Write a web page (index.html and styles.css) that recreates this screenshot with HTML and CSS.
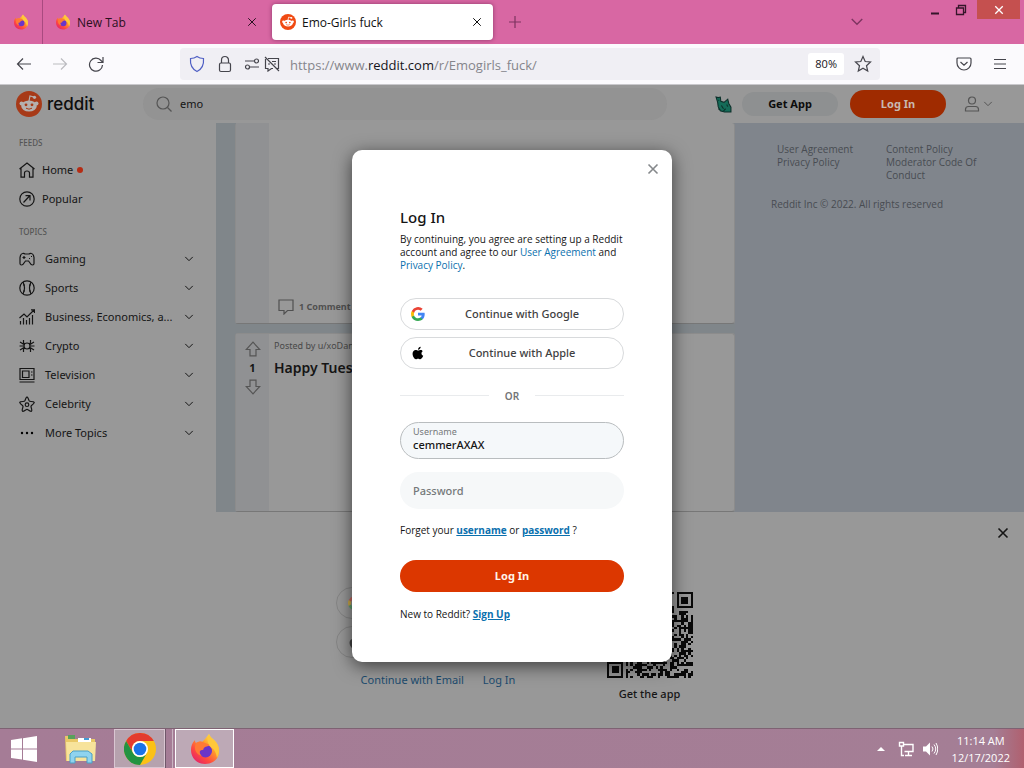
FILE: index.html
```html
<!DOCTYPE html>
<html lang="en">
<head>
<meta charset="utf-8">
<meta name="viewport" content="width=device-width, initial-scale=1">
<title>Emo-Girls fuck</title>
<link rel="stylesheet" href="styles.css">
</head>
<body>
<svg class="defs" aria-hidden="true">
  <defs>
    <linearGradient id="fox-body" x1="0.9" y1="0.1" x2="0.2" y2="1">
      <stop offset="0" stop-color="#fff04a"/><stop offset=".35" stop-color="#ffa02b"/><stop offset=".7" stop-color="#ff4a3f"/><stop offset="1" stop-color="#e3206c"/>
    </linearGradient>
    <symbol id="firefox" viewBox="0 0 32 32">
      <path d="M20 1c1 3 3 4 5 6 3 3 5 6 5 11 0 8-6 13-14 13S2 25 2 17c0-4 1-7 4-10 0 1 0 2 1 3 2-1 4-2 6-1 3-3 5-5 7-8z" fill="url(#fox-body)"/>
      <circle cx="16.500" cy="18" r="6.500" fill="#6a35c9"/>
      <path d="M7 10c3-2 6-2 9 0 2 1 4 1 5 2-2 2-5 1-6 3-1 1 0 2-2 2-3 0-3 4 0 6-5-1-9-6-6-13z" fill="#ff7a35"/>
      <path d="M20 1c1 3 3 4 5 6 3 3 5 6 5 11 0 3-1 5-2 7-1-5-2-8-5-10-4-3-6-8-3-14z" fill="#ffc83a"/>
    </symbol>
    <symbol id="snoo" viewBox="0 0 26 26">
      <circle cx="13" cy="13" r="13" fill="currentColor"/>
      <g class="face">
        <path d="M13 10l1-5 4 1" fill="none" stroke="var(--face, #fff)" stroke-width="1.200"/>
        <circle cx="18.500" cy="6.300" r="1.600" fill="var(--face, #fff)"/>
        <circle cx="5.500" cy="12.500" r="2" fill="var(--face, #fff)"/><circle cx="20.500" cy="12.500" r="2" fill="var(--face, #fff)"/>
        <ellipse cx="13" cy="15" rx="7.800" ry="5.500" fill="var(--face, #fff)"/>
      </g>
      <circle cx="10" cy="13.800" r="1.400" fill="currentColor"/><circle cx="16" cy="13.800" r="1.400" fill="currentColor"/>
      <path d="M10 17.200q3 2 6 0" fill="none" stroke="currentColor"/>
    </symbol>
    <symbol id="cross" viewBox="0 0 12 12"><path d="M1.500 1.500l9 9M10.500 1.500l-9 9"/></symbol>
    <symbol id="chevron" viewBox="0 0 12 12"><path d="M1.500 3.500L6 8l4.500-4.500"/></symbol>
    <symbol id="vote" viewBox="0 0 16 16"><path d="M8 1.200L14.800 8.500H11V14.800H5V8.500H1.200z"/></symbol>
    <symbol id="google" viewBox="0 0 18 18">
      <path d="M17.600 9.200c0-.6-.1-1.200-.2-1.800H9v3.500h4.800a4.100 4.100 0 0 1-1.800 2.700v2.300h2.900c1.700-1.600 2.700-3.900 2.700-6.700z" fill="#4285f4"/>
      <path d="M9 18c2.400 0 4.500-.8 6-2.200l-3-2.200c-.8.500-1.800.9-3 .9-2.300 0-4.300-1.600-5-3.700H1v2.300A9 9 0 0 0 9 18z" fill="#34a853"/>
      <path d="M4 10.700a5.400 5.400 0 0 1 0-3.400V5H1a9 9 0 0 0 0 8z" fill="#fbbc05"/>
      <path d="M9 3.600c1.300 0 2.500.5 3.400 1.300L15 2.300A9 9 0 0 0 1 5l3 2.300c.7-2.100 2.700-3.700 5-3.700z" fill="#ea4335"/>
    </symbol>
    <symbol id="apple" viewBox="0 0 16 18">
      <path d="M11.500 1c.1 2-1.500 3.800-3.500 3.800C7.800 3 9.500 1.200 11.500 1zM14 6.700c-2.300 1.400-2 4.800.7 5.900-.7 2-2.200 4.400-3.800 4.400-1.100 0-1.500-.7-2.800-.7s-1.700.7-2.800.7C3.200 17 1 12.800 1 10c0-3.200 2-5 4-5 1.300 0 2.200.8 3.200.8S10.300 5 11.700 5c1 0 1.800.7 2.300 1.700z"/>
    </symbol>
  </defs>
</svg>

<div class="window">
  <header class="tabstrip">
    <button class="pinned" aria-label="Pinned tab"><svg class="i16"><use href="#firefox"/></svg></button>
    <div class="tab">
      <svg class="i16"><use href="#firefox"/></svg><span class="tab-title">New Tab</span>
      <button class="tab-close" aria-label="Close tab"><svg class="line i10"><use href="#cross"/></svg></button>
    </div>
    <div class="tab active">
      <svg class="i16 orange"><use href="#snoo"/></svg><span class="tab-title">Emo-Girls fuck</span>
      <button class="tab-close" aria-label="Close tab"><svg class="line i10"><use href="#cross"/></svg></button>
    </div>
    <button class="new-tab" aria-label="New tab"><svg class="line i12" viewBox="0 0 12 12"><path d="M6 0v12M0 6h12"/></svg></button>
    <button class="all-tabs" aria-label="List all tabs"><svg class="line i14"><use href="#chevron"/></svg></button>
    <div class="controls">
      <button aria-label="Minimize"><svg class="i12" viewBox="0 0 12 12"><path d="M2 8.500h8v2H2z" fill="#35152a"/></svg></button>
      <button aria-label="Restore"><svg class="i12" viewBox="0 0 12 12"><path d="M1.500 4h7v6.500h-7zM3.500 4V1.500h7v7h-2" fill="none" stroke="#35152a" stroke-width="1.300"/></svg></button>
      <button class="shut" aria-label="Close"><svg class="line heavy i10"><use href="#cross"/></svg></button>
    </div>
  </header>

  <nav class="toolbar" aria-label="Navigation">
    <div class="history">
      <button aria-label="Back"><svg class="line i16" viewBox="0 0 16 16"><path d="M15 8H1.500M7 2.500L1.500 8 7 13.500"/></svg></button>
      <button class="off" aria-label="Forward"><svg class="line i16" viewBox="0 0 16 16"><path d="M1 8h13.500M9 2.500L14.500 8 9 13.500"/></svg></button>
      <button aria-label="Reload"><svg class="line i16" viewBox="0 0 16 16"><path d="M14.500 9A6.500 6.500 0 1 1 13 4.500l1.500 1.500M15 1v5.500H9.500"/></svg></button>
    </div>
    <div class="urlbar">
      <svg class="line i18 shield" viewBox="0 0 18 18"><path d="M9 1.500c2 1.500 4 2 6.500 2C16 9 14 14 9 16.500 4 14 2 9 2.500 3.500c2.500 0 4.500-.5 6.500-2z"/></svg>
      <svg class="line i18" viewBox="0 0 18 18"><rect x="3.500" y="8" width="11" height="8.500" rx="1.500"/><path d="M5.500 8V5a3.500 3.500 0 0 1 7 0v3"/></svg>
      <svg class="line i16 perm" viewBox="0 0 16 16"><path d="M9 5H15M1 11h1M1 5h8" stroke="none"/><path d="M1 5h9M6 11h9"/><circle cx="12.500" cy="5" r="2"/><circle cx="3.500" cy="11" r="2"/></svg>
      <svg class="line i16" viewBox="0 0 16 16"><path d="M4 2.500h10.500v10H12M1.500 3v9.500H4V15l3.500-2.500H9M1 1l14 14M8 5.500h4M10 8h2M4 8h2"/></svg>
      <div class="url" role="textbox" aria-label="Address">https://www.<b>reddit.com</b>/r/Emogirls_fuck/</div>
      <button class="zoom">80%</button>
      <button class="star" aria-label="Bookmark"><svg class="line i18" viewBox="0 0 18 18"><path d="M9 1.500l2.200 5 5.300.5-4 3.700 1.200 5.300L9 13.200 4.300 16l1.200-5.300-4-3.700 5.300-.5z"/></svg></button>
    </div>
    <div class="tools">
      <button aria-label="Save to Pocket"><svg class="line i16" viewBox="0 0 16 16"><path d="M2 2h12q1 0 1 1v4a7 7 0 0 1-14 0V3q0-1 1-1zM4.500 6L8 9.300 11.500 6"/></svg></button>
      <button aria-label="Menu"><svg class="line i14" viewBox="0 0 14 14"><path d="M1 2.500h12M1 7h12M1 11.500h12"/></svg></button>
    </div>
  </nav>

  <div class="page">
    <header class="site-head">
      <a class="brand" href="#"><svg class="i26"><use href="#snoo"/></svg><span>reddit</span></a>
      <label class="search"><svg class="line i16" viewBox="0 0 16 16"><circle cx="7" cy="7" r="6"/><path d="M11.500 11.500L15.500 15.500"/></svg><input type="text" value="emo" aria-label="Search"></label>
      <svg class="dino" viewBox="0 0 16 16" aria-hidden="true"><path d="M1 1l2 .5L5 1l.5 4 3 1L12 3l1 4 2 3.500V15H9l-4-1-2-4-.5-4z" fill="#146b58" stroke="#0c2f2a"/><path d="M3 4h1M6 9l2 3M11 8l1 2M8 14l2-2M3 12l2 1" stroke="#0c2f2a"/></svg>
      <button class="pill get">Get App</button>
      <button class="pill go">Log In</button>
      <button class="account" aria-label="Account menu"><svg class="line i16" viewBox="0 0 16 16"><circle cx="8" cy="4.500" r="3.500"/><path d="M1.500 15v-1.500q0-3 3-3h7q3 0 3 3V15z"/></svg><svg class="line i10"><use href="#chevron"/></svg></button>
    </header>

    <div class="columns">
      <aside class="side">
        <h3>FEEDS</h3>
        <ul>
          <li><a href="#"><svg class="line i16" viewBox="0 0 16 16"><path d="M.5 7L8 1l7.500 6M2 6v9.200h3.500V11q0-2 2.500-2t2.500 2v4.200H14V6"/></svg>Home<i class="dot"></i></a></li>
          <li><a href="#"><svg class="line i16" viewBox="0 0 16 16"><circle cx="8" cy="8" r="7.200"/><path d="M4.500 11.500l6.500-7M6.500 4.700H11v4.800"/></svg>Popular</a></li>
        </ul>
        <h3>TOPICS</h3>
        <ul class="topics">
          <li><button><svg class="line i16" viewBox="0 0 16 16"><path d="M3.500 2.500Q5 2 6 3h4q1-1 2.500-.5 2 .5 2.500 4v6q0 1.500-1.500 1.500T11 12L9.500 10h-3L5 12q-1 2-2.500 2T1 12.500v-6q.5-3.500 2.500-4zM3.500 6.500h3M5 5v3M10 7.500h1M12 5.500h1"/></svg><span>Gaming</span><svg class="line i10"><use href="#chevron"/></svg></button></li>
          <li><button><svg class="line i16" viewBox="0 0 16 16"><circle cx="8" cy="8" r="7.200"/><path d="M4 2q3 6 0 12M12 2q-3 6 0 12M4 5h2M4 11h2M10 5h2M10 11h2"/></svg><span>Sports</span><svg class="line i10"><use href="#chevron"/></svg></button></li>
          <li><button><svg class="line i16" viewBox="0 0 16 16"><path d="M.5 9L5 5l3 3 7.500-7.500M12 .8h3.500V4M1.500 12v3.500M4.500 9v6.500M7.500 11v4.500M10.500 9v6.500M13.500 6v9.500"/></svg><span>Business, Economics, a...</span><svg class="line i10"><use href="#chevron"/></svg></button></li>
          <li><button><svg class="line i16" viewBox="0 0 16 16"><circle cx="8" cy="8" r="3"/><path d="M.5 8H5M11 8h4.500M6 5.700L4.500 5V2M10 5.700l1.500-.7V2M6 10.300l-1.500.7v3M10 10.300l1.500.7v3M1 4l4 2.500M15 4l-4 2.500M1 12l4-2.500M15 12l-4-2.500"/></svg><span>Crypto</span><svg class="line i10"><use href="#chevron"/></svg></button></li>
          <li><button><svg class="line i16" viewBox="0 0 16 16"><path d="M1 1.500h14v11H1zM.5 15h15M3.500 4h6.500v6.500H3.500zM12 5h1.500M12 8h1.500"/></svg><span>Television</span><svg class="line i10"><use href="#chevron"/></svg></button></li>
          <li><button><svg class="line i16" viewBox="0 0 16 16"><path d="M8 .8Q9 1 10 4.500q.5 1 2 1 3 0 3.300 1-.2 1-2.800 3-.8.700-.3 2 1 3 .3 3.700-1 .5-3.500-1.400-1-.8-2 0Q4.500 15.700 3.500 15.200q-.7-.7.3-3.700.5-1.300-.3-2Q.9 7.500.7 6.500q.3-1 3.300-1 1.500 0 2-1Q7 1 8 .8z"/><circle cx="8" cy="8.700" r="1.800"/></svg><span>Celebrity</span><svg class="line i10"><use href="#chevron"/></svg></button></li>
          <li><button><svg class="i16" viewBox="0 0 16 16"><circle cx="3" cy="8" r="1.200"/><circle cx="8" cy="8" r="1.200"/><circle cx="13" cy="8" r="1.200"/></svg><span>More Topics</span><svg class="line i10"><use href="#chevron"/></svg></button></li>
        </ul>
      </aside>

      <main class="feed">
        <article class="post first">
          <div class="votes"></div>
          <div class="post-body"><a class="comments" href="#"><svg class="line i16" viewBox="0 0 16 16"><path d="M1 1h14v10.500H9.500L6 15v-3.500H1z"/></svg>1 Comment</a></div>
        </article>
        <article class="post">
          <div class="votes">
            <button aria-label="Upvote"><svg class="line i16"><use href="#vote"/></svg></button>
            <strong>1</strong>
            <button aria-label="Downvote"><svg class="line i16 down"><use href="#vote"/></svg></button>
          </div>
          <div class="post-body"><p>Posted by u/xoDan</p><h2>Happy Tuesday</h2></div>
        </article>
      </main>

      <aside class="legal">
        <div class="legal-links">
          <div><a href="#">User Agreement</a><a href="#">Privacy Policy</a></div>
          <div><a href="#">Content Policy</a><a href="#">Moderator Code Of Conduct</a></div>
        </div>
        <p>Reddit Inc © 2022. All rights reserved</p>
      </aside>
    </div>

    <section class="banner">
      <div class="signup">
        <button aria-label="Continue with Google"><svg class="i14"><use href="#google"/></svg></button>
        <button aria-label="Continue with Apple"><svg class="i14"><use href="#apple"/></svg></button>
        <div class="signup-links"><a href="#">Continue with Email</a><a href="#">Log In</a></div>
      </div>
      <div class="app"><svg id="qr" class="qr" viewBox="0 0 37 37" role="img" aria-label="QR code"></svg><span>Get the app</span></div>
      <button class="banner-close" aria-label="Dismiss"><svg class="line heavy i12"><use href="#cross"/></svg></button>
    </section>

    <div class="overlay">
      <form class="modal" role="dialog" aria-labelledby="login-title">
        <button type="button" class="modal-close" aria-label="Close"><svg class="line heavy i12"><use href="#cross"/></svg></button>
        <h1 id="login-title">Log In</h1>
        <p class="terms">By continuing, you agree are setting up a Reddit account and agree to our <a href="#">User Agreement</a> and <a href="#">Privacy Policy</a>.</p>
        <button type="button" class="sso"><svg class="i14"><use href="#google"/></svg><span>Continue with Google</span></button>
        <button type="button" class="sso"><svg class="i14"><use href="#apple"/></svg><span>Continue with Apple</span></button>
        <div class="or">OR</div>
        <div class="field filled"><label for="user">Username</label><input id="user" type="text" value="cemmerAXAX"></div>
        <div class="field"><input type="password" placeholder="Password" aria-label="Password"></div>
        <p class="forgot">Forget your <a href="#">username</a> or <a href="#">password</a> ?</p>
        <button type="button" class="submit">Log In</button>
        <p class="join">New to Reddit? <a href="#">Sign Up</a></p>
      </form>
    </div>
  </div>

  <footer class="taskbar">
    <button class="start" aria-label="Start"><svg viewBox="0 0 28 28"><path d="M1 5l11-1.700V13.500H1zM13 3.200L27 1v12.500H13zM1 14.500h11v10L1 23zM13 14.500h14V27l-14-2.200z" fill="#fff"/></svg></button>
    <button class="files" aria-label="File Explorer"><svg viewBox="0 0 34 30"><path d="M1 2h8l2 3h20v22H2z" fill="#e9c866"/><path d="M4 1h7v4H4z" fill="#59a05b"/><path d="M14 4h13v4H14z" fill="#fff"/><path d="M20 4h5v2h-5z" fill="#429cd6"/><path d="M2 8h30l-1 19H3z" fill="#f7e39b"/><path d="M6 29V20l3-3h15l4 3v9h-5v-6H11v6z" fill="#8fd3ee" stroke="#4b9fc6"/></svg></button>
    <button class="task chrome" aria-label="Chrome"><svg viewBox="0 0 32 32"><circle cx="16" cy="16" r="16" fill="#fbc116"/><path d="M2.140 8A16 16 0 0 1 29.860 8H16a8 8 0 0 0-7 12z" fill="#e33b2e"/><path d="M2.140 8A16 16 0 0 0 16 32l6.900-12A8 8 0 0 1 9.100 20z" fill="#229342"/><circle cx="16" cy="16" r="8" fill="#fff"/><circle cx="16" cy="16" r="6.300" fill="#1a73e8"/></svg></button>
    <span class="stack"></span>
    <button class="task current" aria-label="Firefox"><svg><use href="#firefox"/></svg></button>
    <div class="tray">
      <svg class="i10" viewBox="0 0 10 10"><path d="M1 7l4-4 4 4z" fill="#fff"/></svg>
      <svg class="i16" viewBox="0 0 16 16"><path d="M6 3.500h9v7H6.500M10.500 10.500V14M7 14.500h7M1.500 1.500h4V5h-4zM3.500 5v9.500H6" fill="none" stroke="#fff" stroke-width="1.400"/></svg>
      <svg class="i16" viewBox="0 0 16 16"><path d="M1 5.500h3l4-4v13l-4-4H1z" fill="#fff"/><path d="M10 5.500q2 2.500 0 5M12 3.500q3.500 4.500 0 9M14 2q3.500 6 0 12" fill="none" stroke="#fff"/></svg>
      <div class="clock"><span>11:14 AM</span><span>12/17/2022</span></div>
    </div>
  </footer>
</div>
<script src="qr.js"></script>
</body>
</html>
```
FILE: styles.css
```css
* { box-sizing: border-box; }
body, h1, h2, h3, p, ul { margin: 0; padding: 0; }
body { font: 11px/16px "Noto Sans", sans-serif; color: #151515; }
button { border: 0; background: none; padding: 0; font: inherit; color: inherit; display: flex; align-items: center; justify-content: center; }
input { border: 0; background: none; padding: 0; font: inherit; color: inherit; min-width: 0; outline: 0; }
ul { list-style: none; }
a { color: inherit; text-decoration: none; }
svg { flex: none; display: block; }
.defs { position: absolute; width: 0; height: 0; }
.line { fill: none; stroke: currentColor; stroke-width: 1.2; }
.heavy { stroke-width: 1.6; }
.i10 { width: 10px; height: 10px; }
.i12 { width: 12px; height: 12px; }
.i14 { width: 14px; height: 14px; }
.i16 { width: 16px; height: 16px; }
.i18 { width: 18px; height: 18px; }
.i26 { width: 26px; height: 26px; }
.orange { color: #f04a12; }

.window { min-height: 100vh; display: flex; flex-direction: column; overflow: hidden; }

/* Tabs */
.tabstrip { height: 44px; display: flex; align-items: center; background: #d867a3; font: 12px/18px "Open Sans", sans-serif; position: relative; }
.pinned { width: 43px; height: 44px; border-right: 1px solid #a94a80; }
.tab { width: 221px; height: 36px; margin-right: 8px; padding: 0 6px 0 12px; display: flex; align-items: center; gap: 6px; color: #2a1020; }
.tab.active { margin: 0; padding: 0 10px 0 8px; background: #fff; color: #111; border-radius: 4px; box-shadow: 0 0 4px rgba(70, 10, 50, .5); }
.tab-title { flex: 1; padding-top: 1px; }
.tab-close { width: 12px; height: 16px; }
.new-tab { width: 44px; height: 36px; color: #7d3460; }
.all-tabs { margin-left: auto; margin-right: 160px; color: #7d3460; }
.controls { position: absolute; top: 0; right: 4px; display: flex; }
.controls button { width: 26px; height: 19px; }
.controls .shut { width: 43px; margin-left: 3px; background: #c5504f; color: #fff; }

/* Navigation toolbar */
.toolbar { min-height: 41px; display: flex; align-items: center; background: #fbfafd; color: #45454c; border-bottom: 1px solid #c9c8cc; }
.history { display: flex; gap: 20px; padding-left: 16px; width: 180px; }
.off { color: #bbbbc0; }
.urlbar { flex: 1; height: 32px; display: flex; align-items: center; gap: 10px; padding: 0 8px; background: #f0eff4; border-radius: 4px; }
.shield { color: #4f5fc4; }
.perm + svg { margin-left: -6px; }
.url { flex: 1; padding-top: 2px; font: 13px/18px "Open Sans", sans-serif; color: #85858b; }
.url b { font-weight: 400; color: #15141a; }
.zoom { padding: 0 7px; height: 22px; background: #fff; border-radius: 3px; font: 11px/16px "Open Sans", sans-serif; color: #15141a; }
.tools { width: 144px; display: flex; justify-content: flex-end; gap: 21px; padding-right: 17px; }

/* Page behind the dialog */
.page { flex: 1; display: flex; flex-direction: column; position: relative; background: #989898; }
.site-head { height: 38px; display: flex; align-items: center; padding: 0 31px 0 16px; }
.brand { width: 127px; display: flex; align-items: center; gap: 5px; color: #a73a18; --face: #b5b0ae; }
.brand span { color: #0e0e0e; font: 500 17px/24px Inter, sans-serif; }
.search { flex: 1; max-width: 524px; height: 32px; display: flex; align-items: center; gap: 8px; padding: 0 13px; border-radius: 16px; background: #939393; color: #555; }
.search input { flex: 1; color: #151515; }
.dino { width: 17px; height: 17px; margin-left: auto; }
.pill { border-radius: 14px; font-weight: 700; width: 96px; }
.get { height: 24px; margin: 0 12px 0 10px; background: #8e9091; color: #0c0c0c; }
.go { height: 28px; background: #9f2b00; color: #c9b9b0; }
.account { gap: 3px; margin-left: 18px; color: #555; }
.columns { flex: 1; display: flex; background: #80868a; }
.side { width: 216px; background: #989898; padding: 13px 19px 0; }
.side h3 { font: 500 8px/14px "Noto Sans", sans-serif; color: #555; margin-bottom: 5px; }
.side ul { margin-bottom: 12px; }
.side li a, .side li button { width: 100%; height: 29px; display: flex; align-items: center; gap: 7px; }
.side .topics button { gap: 10px; padding-right: 3px; text-align: left; }
.side .topics { margin: 0; }
.topics span { flex: 1; white-space: nowrap; }
.dot { width: 6px; height: 6px; border-radius: 50%; background: #b52c14; margin-left: -3px; }
.feed { flex: 1; margin-left: 19px; display: flex; flex-direction: column; gap: 9px; }
.post { flex: 1; display: flex; background: #989898; border: 1px solid #8c8c8c; border-bottom-color: #777; border-radius: 3px; }
.post.first { flex: 0 0 201px; border-top: 0; }
.votes { width: 33px; padding-top: 7px; display: flex; flex-direction: column; align-items: center; gap: 3px; background: #909193; color: #555; }
.votes strong { color: #151515; }
.down { transform: rotate(180deg); }
.post-body { flex: 1; padding: 4px 5px; display: flex; flex-direction: column; }
.post-body p { font-size: 9px; color: #484848; }
.post-body h2 { font: 600 14px/20px "Noto Sans", sans-serif; margin-top: 4px; }
.comments { margin-top: auto; padding: 0 2px 4px 4px; display: flex; align-items: center; gap: 5px; font: 700 9px/16px "Noto Sans", sans-serif; color: #505050; }
.legal { width: 289px; padding: 20px 36px 0; background: #80858c; font: 10px/13px "Open Sans", sans-serif; color: #484c52; }
.legal-links { display: grid; grid-template-columns: 109px 1fr; padding-left: 6px; margin-bottom: 16px; }
.legal-links a { display: block; }

/* Sign-up banner */
.banner { position: relative; display: flex; justify-content: center; gap: 66px; padding: 75px 0 26px 4px; background: #989898; }
.signup { width: 205px; display: flex; flex-direction: column; gap: 7px; }
.signup button { height: 32px; justify-content: flex-start; padding-left: 11px; border: 1px solid #858585; border-radius: 16px; }
.signup svg { opacity: .55; }
.signup-links { display: flex; justify-content: center; gap: 19px; padding-top: 7px; color: #1b4b6e; }
.app { display: flex; flex-direction: column; align-items: center; padding-top: 5px; gap: 8px; font-weight: 500; }
.qr { width: 86px; height: 86px; shape-rendering: crispEdges; }
.banner-close { position: absolute; top: 15px; right: 15px; }

/* Login dialog */
.overlay { position: absolute; inset: 0; display: flex; align-items: center; justify-content: center; }
.modal { position: relative; width: 320px; min-height: 512px; margin-bottom: 2px; padding: 57px 48px 40px; background: #fff; border-radius: 10px; box-shadow: 0 4px 18px rgba(0, 0, 0, .6); font-size: 10px; line-height: 13px; }
.modal-close { position: absolute; top: 13px; right: 13px; color: #85888b; }
.modal h1 { font: 500 15px/20px "Noto Sans", sans-serif; margin-bottom: 6px; }
.terms { margin-bottom: 26px; font: 10px/13px "Open Sans", sans-serif; }
.modal a { color: #0a70ae; }
.sso { width: 100%; height: 32px; padding: 0 10px; margin-bottom: 7px; border: 1px solid #d8dadc; border-radius: 16px; color: #3f4142; font: 500 11px/16px "Noto Sans", sans-serif; }
.sso span { flex: 1; padding-left: 6px; }
.or { display: flex; align-items: center; gap: 16px; margin: 19px 0 18px; font: 600 10px/16px "Noto Sans", sans-serif; color: #737577; }
.or::before, .or::after { content: ""; flex: 1; height: 1px; background: #e9ebed; }
.field { height: 37px; margin-bottom: 13px; padding: 0 12px; display: flex; flex-direction: column; justify-content: center; border-radius: 19px; background: #f6f8f9; border: 1px solid transparent; font-size: 11px; }
.field.filled { background: #f5f8fa; border-color: #b9bdbf; padding-bottom: 2px; }
.field label { font-size: 9px; line-height: 12px; color: #75787a; }
.filled input { font-weight: 500; line-height: 14px; height: 14px; }
.field input::placeholder { color: #75787a; opacity: 1; font-weight: 500; }
.forgot, .join { font: 10px/16px "Open Sans", sans-serif; }
.forgot a, .join a { font-weight: 700; text-decoration: underline; }
.submit { width: 100%; height: 32px; margin: 22px 0 14px; border-radius: 16px; background: #dc3700; color: #fff3e8; font: 700 11px/16px "Noto Sans", sans-serif; }

/* Taskbar */
.taskbar { height: 40px; display: flex; background: linear-gradient(90deg, #a57c96, #a47e95 97%, #b0606f); border-top: 1px solid #7e6273; color: #fff; }
.start { width: 48px; }
.start svg { width: 28px; height: 28px; }
.files { width: 66px; }
.files svg { width: 34px; height: 30px; }
.task { border: 1px solid #d9c6d2; background: #b6a2ae; }
.task svg { width: 32px; height: 32px; }
.chrome { width: 51px; }
.stack { width: 8px; margin-right: 2px; border: solid #c9b4c1; border-width: 0 1px; border-left-color: #70586a; }
.current { width: 59px; border-color: #fff; background: #bda9b6; }
.tray { margin-left: auto; display: flex; align-items: center; gap: 8px; padding-right: 14px; }
.tray .i10 { margin-right: 4px; }
.clock { display: flex; flex-direction: column; align-items: center; margin-left: 6px; font: 11px/17px "Open Sans", sans-serif; }
```
FILE: qr.js
```js
(function () {
  var size = 37, seed = 29, path = "";
  function finder(x, y) {
    var corners = [[0, 0], [size - 7, 0], [0, size - 7]];
    for (var i = 0; i < 3; i++) {
      var dx = x - corners[i][0], dy = y - corners[i][1];
      if (dx >= -1 && dx <= 7 && dy >= -1 && dy <= 7) {
        var ring = Math.max(Math.abs(dx - 3), Math.abs(dy - 3));
        return ring === 3 || ring < 2;
      }
    }
    return null;
  }
  for (var y = 0; y < size; y++) {
    for (var x = 0; x < size; x++) {
      seed = (seed * 1103515245 + 12345) % 2147483648;
      var mark = finder(x, y);
      if (mark === null) mark = seed / 2147483648 > 0.45;
      if (mark) path += "M" + x + " " + y + "h1v1h-1z";
    }
  }
  document.getElementById("qr").innerHTML = '<path d="' + path + '" fill="#0a0a0a"/>';
})();
```
